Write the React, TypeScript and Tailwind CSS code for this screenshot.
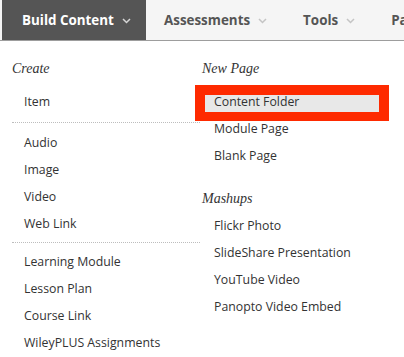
import React from 'react';

const Chevron = ({ color }: { color: string }) => (
  <svg width="9" height="6" viewBox="0 0 9 6" className="ml-2 mt-[2px] shrink-0">
    <polyline points="1,1 4.5,4.5 8,1" fill="none" stroke={color} strokeWidth="1.5" />
  </svg>
);

const Row = ({ label }: { label: string }) => (
  <div className="h-[27px] pl-3 text-[12.3px] leading-[27px] text-[#333]">{label}</div>
);

const Heading = ({ label, className = '' }: { label: string; className?: string }) => (
  <div className={`h-[20px] font-['Liberation_Serif',serif] text-[14px] italic leading-[20px] text-[#333] ${className}`}>
    {label}
  </div>
);

const Separator = ({ className }: { className: string }) => (
  <div className={`border-t border-dotted border-[#bdbdbd] ${className}`} />
);

const Tab = ({ label, chevron = true }: { label: string; chevron?: boolean }) => (
  <div className="flex shrink-0 items-center px-[18px] text-[13.4px] font-bold text-[#555]">
    {label}
    {chevron && <Chevron color="#c4c4c4" />}
  </div>
);

export default function App() {
  return (
    <div className="h-[357px] w-[404px] overflow-hidden bg-white font-['Open_Sans',sans-serif]">
      <nav className="flex h-[41px] overflow-hidden border-b border-[#9d9d9d] bg-[#f5f5f5] pl-[2px] whitespace-nowrap">
        <div className="flex w-[144px] shrink-0 items-center bg-[#555] pl-5 text-[13.4px] font-bold text-white">
          Build Content
          <Chevron color="#d6d6d6" />
        </div>
        <Tab label="Assessments" />
        <Tab label="Tools" />
        <Tab label="Partner" chevron={false} />
      </nav>

      <div className="flex px-3 pt-[18px]">
        <div className="w-[188px]">
          <Heading label="Create" className="mb-[8.5px]" />
          <Row label="Item" />
          <Separator className="mt-[7px] mb-[6px]" />
          <Row label="Audio" />
          <Row label="Image" />
          <Row label="Video" />
          <Row label="Web Link" />
          <Separator className="mt-[5px] mb-[5px]" />
          <Row label="Learning Module" />
          <Row label="Lesson Plan" />
          <Row label="Course Link" />
          <Row label="WileyPLUS Assignments" />
        </div>

        <div className="ml-[2px] flex-1">
          <Heading label="New Page" className="mb-[8.5px]" />
          <div className="relative h-[27px]">
            <div className="absolute left-[3px] top-[7.5px] h-[17px] w-[174px] bg-[#e8e8e8]" />
            <div className="relative pl-3 text-[12.3px] leading-[27px] text-[#333]">Content Folder</div>
            <div className="absolute left-[-7px] top-[-2.5px] h-[36px] w-[194px] border-[10px] border-b-[9px] border-[#fe2a00]" />
          </div>
          <Row label="Module Page" />
          <Row label="Blank Page" />
          <Heading label="Mashups" className="mt-[20px] mb-[3px]" />
          <Row label="Flickr Photo" />
          <Row label="SlideShare Presentation" />
          <Row label="YouTube Video" />
          <Row label="Panopto Video Embed" />
        </div>
      </div>
    </div>
  );
}
